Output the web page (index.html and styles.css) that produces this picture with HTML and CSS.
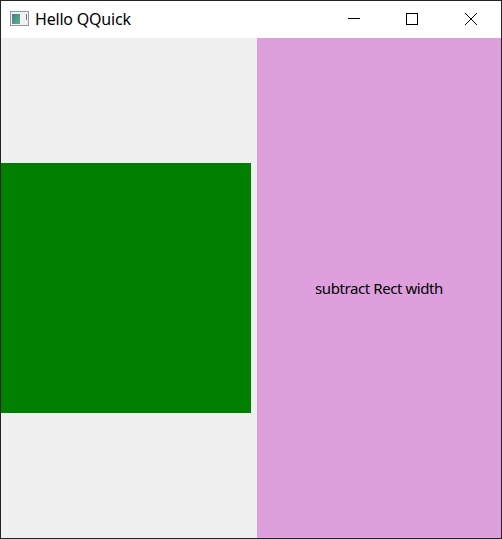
FILE: index.html
```html
<!DOCTYPE html>
<html lang="en">
<head>
<meta charset="utf-8">
<title>Hello QQuick</title>
<link rel="stylesheet" href="styles.css">
</head>
<body>
<div class="window">
  <header class="titlebar">
    <svg class="app-icon" width="19" height="15" viewBox="0 0 19 15">
      <defs>
        <linearGradient id="pane" x1="0" y1="0" x2="1" y2="1">
          <stop offset="0" stop-color="#45808a"/>
          <stop offset="1" stop-color="#5fae8c"/>
        </linearGradient>
      </defs>
      <rect x=".5" y=".5" width="18" height="14" fill="#f1f1f1" stroke="#939a9f"/>
      <rect x="2" y="3" width="8" height="10" fill="url(#pane)"/>
      <rect x="16" y="3" width="1" height="6" fill="#777"/>
    </svg>
    <h1 class="title">Hello QQuick</h1>
    <svg class="controls" width="129" height="13" viewBox="0 0 129 13" fill="none" stroke="#000">
      <path d="M0 5.5h12"/>
      <rect x="58.5" y=".5" width="11" height="11"/>
      <path d="M117 0l12 12M129 0l-12 12"/>
    </svg>
  </header>
  <main class="content">
    <section class="left"><div class="rect"></div></section>
    <section class="right"><span class="label">subtract Rect width</span></section>
  </main>
</div>
</body>
</html>
```
FILE: styles.css
```css
* { box-sizing: border-box; }
body { margin: 0; }
.window { width: 502px; height: 539px; border: 1px solid #262326; display: flex; flex-direction: column; background: #fff; }
.titlebar { height: 37px; display: flex; align-items: center; padding: 0 24px 0 9px; }
.app-icon { margin-bottom: 2px; }
.title { margin: 0 0 2px 6px; font: 400 16px "Noto Sans", sans-serif; letter-spacing: -0.2px; color: #000; white-space: nowrap; }
.controls { margin-left: auto; }
.content { flex: 1; display: flex; gap: 6px; background: #f0f0f0; }
.left { width: 250px; display: flex; align-items: center; }
.rect { width: 250px; height: 250px; background: #008000; }
.right { flex: 1; display: flex; align-items: center; justify-content: center; background: #dda0dd; }
.label { font: 15px "Noto Sans", sans-serif; letter-spacing: -0.42px; color: #000; white-space: nowrap; }
```
